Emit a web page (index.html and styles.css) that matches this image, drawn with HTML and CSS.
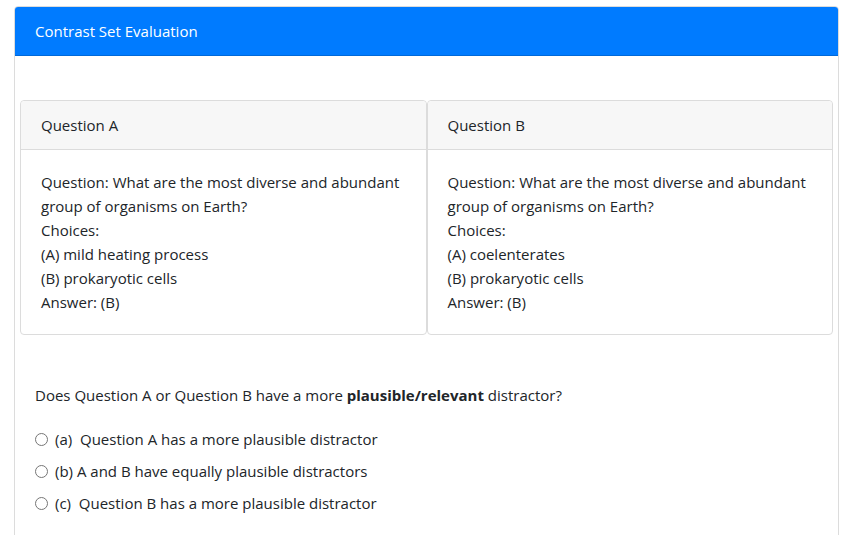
FILE: index.html
```html
<!DOCTYPE html>
<html>
<head>
<meta charset="utf-8">
<link rel="stylesheet" href="styles.css">
</head>
<body>
<div class="card outer">
  <div class="outer-header">Contrast Set Evaluation</div>
  <div class="outer-body">
    <div class="pair">
      <div class="qcard">
        <div class="qcard-header">Question A</div>
        <div class="qcard-body">
          Question: What are the most diverse and abundant group of organisms on Earth?<br>
          Choices:<br>
          (A) mild heating process<br>
          (B) prokaryotic cells<br>
          Answer: (B)
        </div>
      </div>
      <div class="qcard">
        <div class="qcard-header">Question B</div>
        <div class="qcard-body">
          Question: What are the most diverse and abundant group of organisms on Earth?<br>
          Choices:<br>
          (A) coelenterates<br>
          (B) prokaryotic cells<br>
          Answer: (B)
        </div>
      </div>
    </div>
    <p class="prompt">Does Question A or Question B have a more <b>plausible/relevant</b> distractor?</p>
    <div class="options">
      <label class="option"><span class="radio"></span>(a)&nbsp; Question A has a more plausible distractor</label>
      <label class="option"><span class="radio"></span>(b) A and B have equally plausible distractors</label>
      <label class="option"><span class="radio"></span>(c)&nbsp; Question B has a more plausible distractor</label>
    </div>
  </div>
</div>
</body>
</html>
```

FILE: styles.css
```css
html, body {
  margin: 0;
  padding: 0;
  background: #fff;
}
body {
  font-family: "Open Sans", "Noto Sans", sans-serif;
  font-size: 15px;
  line-height: 24px;
  color: #212529;
  padding: 6px 14px 0 14px;
}
.outer {
  border: 1px solid #dcdcdc;
  border-radius: 4px;
  overflow: hidden;
  min-height: 560px;
}
.outer-header {
  background: #007bff;
  color: #fff;
  padding: 12px 20px;
  border-bottom: 1px solid #0069d9;
}
.outer-body {
  padding: 44px 20px 20px;
}
.pair {
  display: flex;
  margin: 0 -15px;
}
.qcard {
  flex: 1 1 0;
  border: 1px solid #dcdcdc;
  border-radius: 4px;
  background: #fff;
}
.qcard-header {
  background: #f7f7f7;
  padding: 12px 20px;
  border-bottom: 1px solid #dcdcdc;
  border-radius: 4px 4px 0 0;
}
.qcard-body {
  padding: 20px;
}
.prompt {
  margin: 48px 0 20px;
}
.options {
  display: flex;
  flex-direction: column;
  gap: 8px;
}
.option {
  display: flex;
  align-items: center;
}
.radio {
  width: 11px;
  height: 11px;
  border: 1px solid #767676;
  border-radius: 50%;
  margin-right: 7px;
  flex: none;
}
```
